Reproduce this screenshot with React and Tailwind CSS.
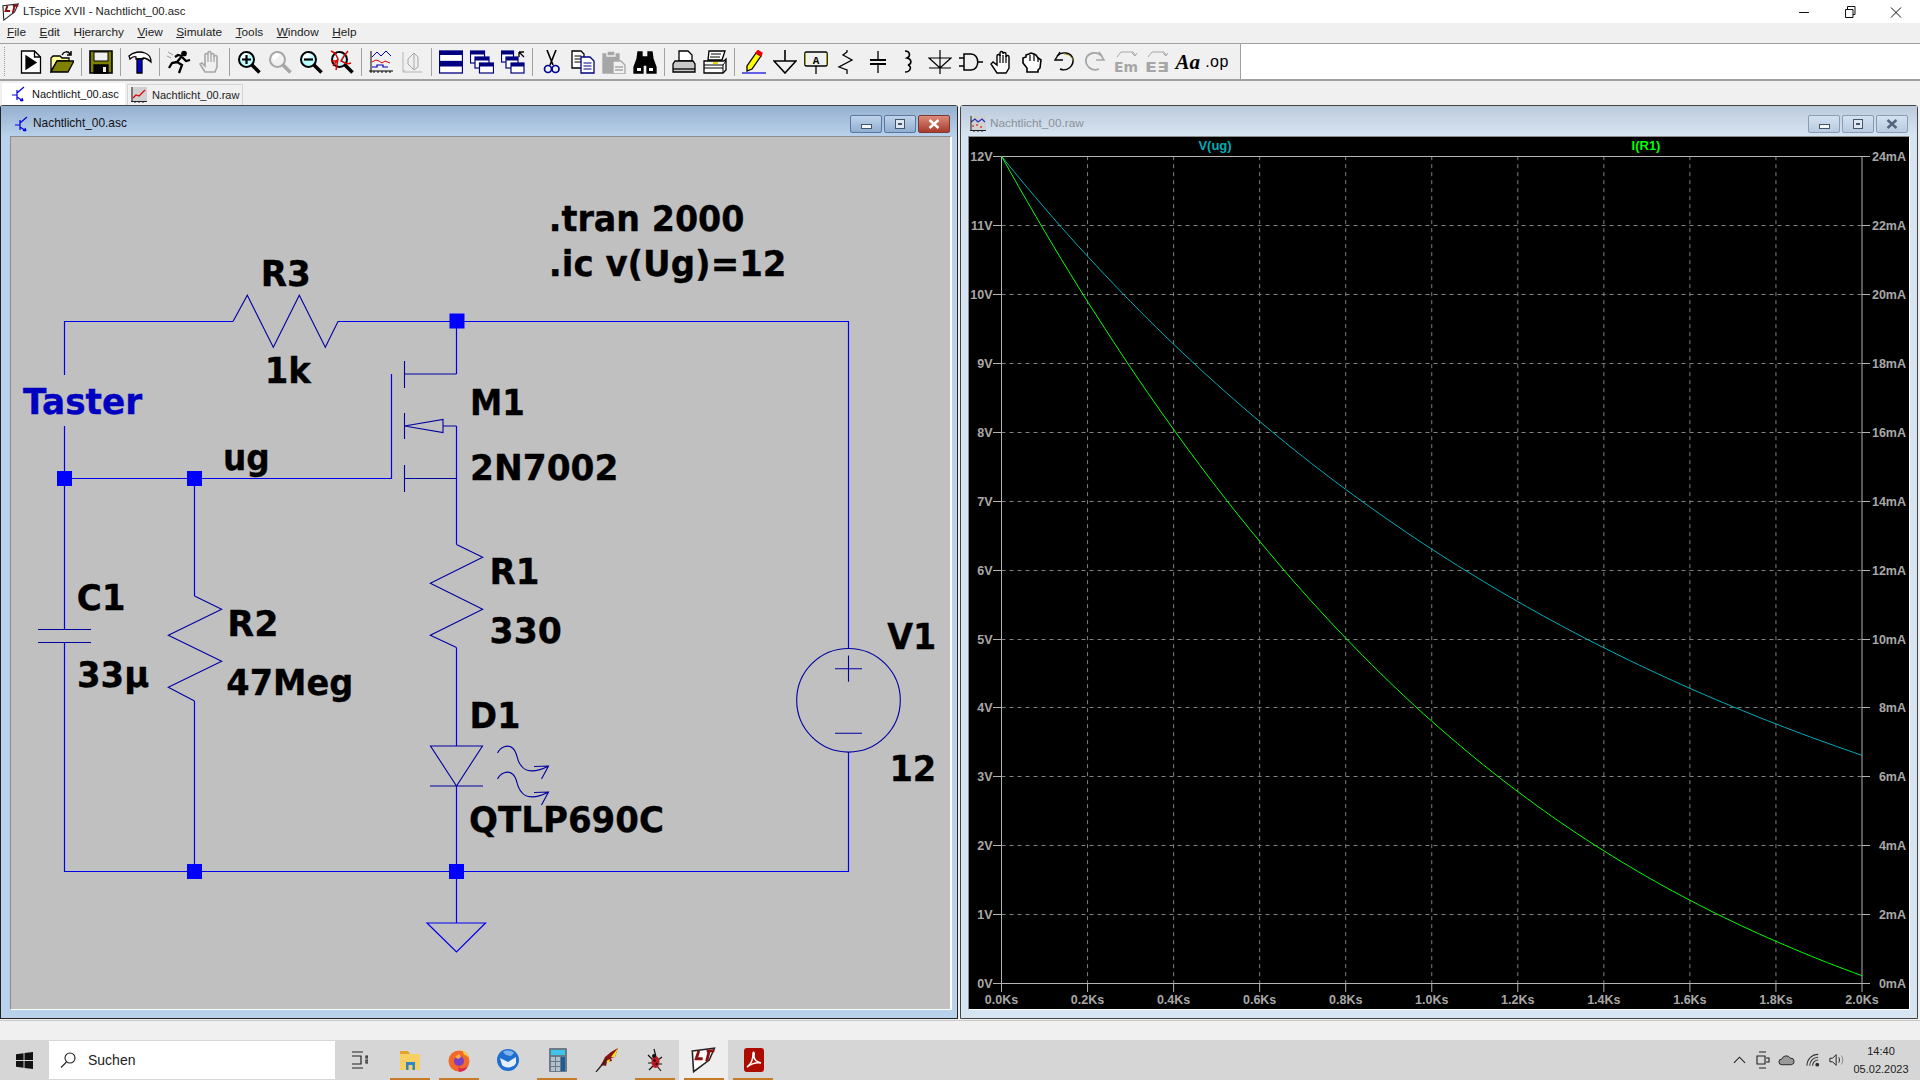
import React from "react";

const uiFont = "font-['Liberation_Sans',Arial,sans-serif]";

// toolbar icon wrapper, everything is drawn on a 24 grid
const Ico = ({ children }) => (
  <svg viewBox="0 0 24 24" className="w-[24px] h-[24px] shrink-0" fill="none" stroke="#000" strokeWidth="1.3">
    {children}
  </svg>
);

const Lens = ({ color = "#000", glass = "#bff", children }) => (
  <>
    <circle cx="9.5" cy="9.5" r="7.5" fill={glass} stroke={color} strokeWidth="2" />
    <path d="M4 8a6 6 0 0 1 5-5l3 2-6 6z" fill="#fff" stroke="none" />
    <path d="M15 15l7.5 7.5" stroke={color} strokeWidth="3.5" />
    {children}
  </>
);

const NewIcon = () => (
  <Ico>
    <path d="M2.5 1h13l6 6v16h-19z" fill="#fff" />
    <path d="M15.5 1v6h6" />
    <path d="M7 6l10 6.5L7 19z" fill="#000" />
  </Ico>
);
const OpenIcon = () => (
  <Ico>
    <path d="M1 21V8l2-2h7l2 2h7v3H7z" fill="#ffff99" />
    <path d="M1 22l6-11h17l-6 11z" fill="#808000" />
    <path d="M12 5c2-4 6-4 8-1M21 1v4h-4" strokeWidth="1.5" />
  </Ico>
);
const SaveIcon = () => (
  <Ico>
    <path d="M1 1h22v22H1z" fill="#808000" strokeWidth="1.6" />
    <path d="M5 2h14v9H5z" fill="#efefef" strokeWidth="1" />
    <path d="M5 15h14v8H5z" fill="#000" />
    <path d="M14 17h3v5h-3z" fill="#efefef" stroke="none" />
  </Ico>
);
const HammerIcon = () => (
  <Ico>
    <path d="M1 6c4-4 11-5 16-3 3 1 6 4 6 9-3-3-5-4-8-4v1H8V7C6 6 4 7 2 9z" fill="#fff" />
    <path d="M9 9h5v14H9z" fill="#0000d0" stroke="#000" />
  </Ico>
);
const RunIcon = () => (
  <Ico>
    <circle cx="17" cy="3.5" r="2.2" fill="#000" />
    <path d="M15 6l-5 6 5 3-3 8M10 12l-5 1-3 5M15 7l4 4 4-1M15 6l-4-1-3 2" strokeWidth="2.3" />
    <path d="M1 2l5 3M0 6l4 2" stroke="#999" strokeWidth="1" />
  </Ico>
);
const HaltIcon = () => (
  <Ico>
    <path
      d="M7 22l-5-8 2-1 3 3V5a1.5 1.5 0 0 1 3 0V3a1.5 1.5 0 0 1 3 0v2a1.5 1.5 0 0 1 3 0v2a1.5 1.5 0 0 1 3 0v10l-2 5z"
      stroke="#a6a6a6"
      strokeWidth="1.6"
    />
    <path d="M10 5v7M13 5v7M16 6v6" stroke="#a6a6a6" />
  </Ico>
);
const ZoomInIcon = () => (
  <Ico>
    <Lens>
      <path d="M5 9.5h9M9.5 5v9" strokeWidth="2.2" />
    </Lens>
  </Ico>
);
const ZoomPanIcon = () => (
  <Ico>
    <Lens color="#a6a6a6" glass="#f0f0f0" />
  </Ico>
);
const ZoomOutIcon = () => (
  <Ico>
    <Lens>
      <path d="M5 9.5h9" strokeWidth="2.2" />
    </Lens>
  </Ico>
);
const ZoomFitIcon = () => (
  <Ico>
    <Lens>
      <path d="M1 1l4 2 3 6-5 7M18 1l-4 5-3 5 6 3 4-1M8 9l-2 11M1 11h6" stroke="#e00000" strokeWidth="1.5" />
    </Lens>
  </Ico>
);
const PlotIcon = () => (
  <Ico>
    <path d="M2 1v22M0 21h24M5 21v2M9 21v2M13 21v2M17 21v2M21 21v2" strokeWidth="1" />
    <path d="M3 7l5-5 4 4 5-5 5 5" stroke="#0000c0" strokeWidth="1" />
    <path d="M3 12l4-2 3 1 3 2 3-2 5 2" stroke="#e00000" strokeWidth="1" />
    <path d="M3 17h5v-2h6v2h5" stroke="#0000c0" strokeWidth="1.2" />
  </Ico>
);
const FftIcon = () => (
  <Ico>
    <path d="M3 2v20h19M3 22l2-2" stroke="#b4b4b4" strokeWidth="1" />
    <path d="M8 9l6-6 4 4v10l-4 3-6-6zM14 3v17" stroke="#a6a6a6" strokeWidth="1" />
  </Ico>
);
const Win = ({ x, y, w, h }) => (
  <>
    <rect x={x} y={y} width={w} height={h} fill="#fff" stroke="#000080" strokeWidth="1.2" />
    <rect x={x} y={y} width={w} height="3.5" fill="#000080" stroke="none" />
  </>
);
const TileIcon = () => (
  <Ico>
    <rect x="0.5" y="1" width="23" height="10.5" fill="#fff" stroke="#000080" />
    <rect x="0.5" y="1" width="23" height="4" fill="#000080" stroke="none" />
    <rect x="0.5" y="12.5" width="23" height="10.5" fill="#fff" stroke="#000080" />
    <rect x="0.5" y="12.5" width="23" height="4" fill="#000080" stroke="none" />
  </Ico>
);
const CascadeIcon = () => (
  <Ico>
    <Win x="0.5" y="1" w="14" h="12" />
    <Win x="5" y="7" w="14" h="11" />
    <Win x="9.5" y="13" w="14" h="10" />
  </Ico>
);
const Cascade2Icon = () => (
  <Ico>
    <Win x="0.5" y="1" w="12" h="11" />
    <Win x="5" y="7" w="12" h="11" />
    <Win x="10" y="13" w="13" h="10" />
    <path d="M18 2h5M18 2v5M18 2l5 5" strokeWidth="1.3" />
  </Ico>
);
const CutIcon = () => (
  <Ico>
    <path d="M7 0l6 15M16 0l-6 15" strokeWidth="1.6" />
    <circle cx="8" cy="19" r="3.5" stroke="#000090" strokeWidth="1.7" />
    <circle cx="15.5" cy="19" r="3.5" stroke="#000090" strokeWidth="1.7" />
  </Ico>
);
const CopyIcon = () => (
  <Ico>
    <path d="M1 1h9l3 3v14H1z" fill="#fff" />
    <path d="M3.5 6h7M3.5 9h7M3.5 12h7" strokeWidth="1" />
    <path d="M10 7h9l4 4v12H10z" fill="#fff" stroke="#000080" />
    <path d="M12.5 13h8M12.5 16h8M12.5 19h8" stroke="#000080" strokeWidth="1" />
  </Ico>
);
const PasteIcon = () => (
  <Ico>
    <path d="M1 4h16v19H1z" fill="#a6a6a6" stroke="#a6a6a6" />
    <path d="M5 1h8v5H5z" fill="#a6a6a6" stroke="#f0f0f0" />
    <path d="M11 11h8l4 4v9H11z" fill="#f0f0f0" stroke="#a6a6a6" />
    <path d="M13 17h8M13 20h8" stroke="#a6a6a6" />
  </Ico>
);
const BinocularsIcon = () => (
  <Ico>
    <path d="M5 2h4v5h6V2h4l1 7 3 8v6h-9v-8h-4v8H1v-6l3-8z" fill="#000" />
    <path d="M4 18h4v3H4zM16 18h4v3h-4z" fill="#fff" stroke="none" />
  </Ico>
);
const PreviewIcon = () => (
  <Ico>
    <path d="M7 1h9l4 4v6H7z" fill="#fff" />
    <path d="M3 11h18l2 3v8H1v-8z" fill="#c8c8c8" />
    <path d="M1 19h22" />
  </Ico>
);
const PrintIcon = () => (
  <Ico>
    <path d="M6 1h16l-3 9H5z" fill="#fff" />
    <path d="M8 4h10M7 7h10" strokeWidth="1" />
    <path d="M1 11h20l2-2v11l-3 3H1z" fill="#fff" />
    <path d="M1 15h19l3-4M1 18h19M20 15v8" strokeWidth="1" />
    <path d="M10 13h5" stroke="#e8d800" strokeWidth="2" />
  </Ico>
);
const PencilIcon = () => (
  <Ico>
    <path d="M14 3l5 3-9 13-5 2 0-5z" fill="#ffff00" />
    <path d="M14 3l2-2.5 4 2.5-1 3z" fill="#e00000" stroke="#e00000" />
    <path d="M0 23h24" stroke="#0000e0" strokeWidth="1.2" />
  </Ico>
);
const GroundIcon = () => (
  <Ico>
    <path d="M12 0v11M1 11h22L12 23z" strokeWidth="1.6" />
  </Ico>
);
const LabelIcon = () => (
  <Ico>
    <rect x="1" y="2" width="22" height="14" rx="1.5" fill="#f0f0f0" stroke="#000" strokeWidth="1.6" />
    <path d="M1.5 3v12M22.5 3v12" stroke="#a0a000" strokeWidth="1" />
    <text x="12" y="13.5" textAnchor="middle" fontSize="11" fontWeight="700" fill="#000" stroke="none" className="font-['Liberation_Mono']">A</text>
    <path d="M12 16v8" />
  </Ico>
);
const ResIcon = () => (
  <Ico>
    <path d="M12 0v2l-4 3 9 5-13 7 8 3v4" strokeWidth="1.3" />
  </Ico>
);
const CapIcon = () => (
  <Ico>
    <path d="M12 1v9M12 14v9" />
    <path d="M4 10h16M4 14h16" strokeWidth="2" />
  </Ico>
);
const CoilIcon = () => (
  <Ico>
    <path d="M8 1c5 0 6 5 2 7 5 1 5 6 1 7 4 1 3 7-3 7" strokeWidth="1.6" />
  </Ico>
);
const DiodeIcon = () => (
  <Ico>
    <path d="M12 0v24M1 8h22L12 18zM1 18h22" strokeWidth="1.2" />
  </Ico>
);
const GateIcon = () => (
  <Ico>
    <path d="M5 4h7c9 0 9 16 0 16H5zM0 8h5M0 16h5M19 12h5" strokeWidth="1.5" />
  </Ico>
);
const HandIcon = ({ w = "1.4" }) => (
  <Ico>
    <path
      d="M7 23l-6-9 2-2 4 3V6a1.5 1.5 0 0 1 3 0V3a1.5 1.5 0 0 1 3 0v1a1.5 1.5 0 0 1 3 0v3a1.5 1.5 0 0 1 3 0v11l-3 5z"
      fill="#fff"
      strokeWidth={w}
    />
    <path d="M10 5v8M13 5v8M16 6v7" strokeWidth="1.2" />
  </Ico>
);
const Hand2Icon = () => (
  <Ico>
    <path d="M6 22v-4l-4-5V8l3-1V5l3-1 2-1 3 1 2 1 2 3 3 2-1 8-2 2v2z" fill="#fff" strokeWidth="1.6" />
    <path d="M9 5v6M13 4v7M17 7v5" strokeWidth="1.2" />
  </Ico>
);
const UndoIcon = () => (
  <Ico>
    <path d="M5 6c5-5 14-4 16 3 1 7-6 13-13 10" strokeWidth="1.4" />
    <path d="M8 2L3 10h8" fill="none" strokeWidth="1.4" />
    <path d="M12 4c4 0 8 2 9 6" stroke="#a08000" strokeWidth="1" />
  </Ico>
);
const RedoIcon = () => (
  <Ico>
    <path d="M19 6C14 1 5 2 3 9c-1 7 6 13 13 10" stroke="#a6a6a6" strokeWidth="1.8" />
    <path d="M16 2l5 8h-8" stroke="#a6a6a6" strokeWidth="1.6" />
  </Ico>
);
const RotateIcon = ({ children }) => (
  <Ico>
    <path d="M3 7l4-5h12l2 3M18 3l3 3 2-3" stroke="#a6a6a6" strokeWidth="1" />
    <text x="0" y="22" fontSize="14" fontWeight="700" fill="#a6a6a6" stroke="none" className="font-['DejaVu_Sans']" textLength="24" lengthAdjust="spacingAndGlyphs">{children}</text>
  </Ico>
);
const FontIcon = () => (
  <span className="w-[24px] text-center font-['Liberation_Serif',serif] italic font-bold text-[21px] leading-none text-black">Aa</span>
);
const OpIcon = () => (
  <span className="w-[24px] text-center whitespace-nowrap font-['Liberation_Sans',sans-serif] text-[16px] leading-none text-black tracking-[0.5px] -ml-[3px]">.op</span>
);

const Sep = () => (
  <div className="w-[8px] flex justify-center shrink-0">
    <div className="w-px h-[28px] bg-[#a0a0a0]" />
  </div>
);

const toolbarItems = [
  NewIcon, OpenIcon, "|", SaveIcon, "|", HammerIcon, "|", RunIcon, HaltIcon, "|",
  ZoomInIcon, ZoomPanIcon, ZoomOutIcon, ZoomFitIcon, "|", PlotIcon, FftIcon, "|",
  TileIcon, CascadeIcon, Cascade2Icon, "|", CutIcon, CopyIcon, PasteIcon, BinocularsIcon, "|",
  PreviewIcon, PrintIcon, "|", PencilIcon, GroundIcon, LabelIcon, ResIcon, CapIcon, CoilIcon,
  DiodeIcon, GateIcon, HandIcon, Hand2Icon, UndoIcon, RedoIcon,
  () => <RotateIcon>Em</RotateIcon>,
  () => <RotateIcon>EƎ</RotateIcon>,
  FontIcon, OpIcon,
];

// little LT logo used in the title bar and on the taskbar
const LtLogo = ({ className }) => (
  <svg viewBox="0 0 20 20" className={className} fill="none">
    <path d="M1 3l17-2-4 9-12 9z" fill="#fff" stroke="#222" strokeWidth="1.2" />
    <path d="M6 3L4 9h5M12 3h6M14 3l-2 8" stroke="#8b1010" strokeWidth="2.2" />
  </svg>
);

const TransistorIcon = () => (
  <svg viewBox="0 0 16 16" className="w-[16px] h-[16px] shrink-0" fill="none" stroke="#0000e0" strokeWidth="1.2">
    <path d="M1 9h5M6 4v10M6 7l7-6M6 11l6 4M12 15l-3-.5M12 15l-1-3" />
  </svg>
);

const PlotTabIcon = ({ dim }) => (
  <svg viewBox="0 0 16 16" className="w-[16px] h-[16px] shrink-0" fill="none" strokeWidth="1">
    <rect x="0" y="0" width="16" height="14" fill="#d0d0d0" />
    <path d={dim ? "M1 6l4-3 3 3 4-3 3 3" : "M2 11l3-3 3 1 6-6"} stroke={dim ? "#2030c0" : "#e00000"} strokeWidth="1.2" />
    {dim && <path d="M2 10h2M6 9h2M10 11h2" stroke="#e00000" />}
    <path d="M1 0v15M0 14.5h16M4 14v2M8 14v2M12 14v2" stroke="#222" />
  </svg>
);

const CaptionButton = ({ kind, active }) => {
  const red = active && kind === "close";
  return (
    <div
      className={
        red
          ? "w-[32px] h-[18px] rounded-[2px] border border-[#7a3a32] bg-gradient-to-b from-[#dc8a7c] to-[#a83a2c] flex items-center justify-center"
          : active
            ? "w-[32px] h-[18px] rounded-[2px] border border-[#5a78a0] bg-gradient-to-b from-[#c0d4ea] to-[#8faed0] flex items-center justify-center"
            : "w-[32px] h-[18px] rounded-[2px] border border-[#8a9cb4] bg-gradient-to-b from-[#d4e2f0] to-[#b8cbe0] flex items-center justify-center"
      }
    >
      {kind === "min" && <div className="w-[11px] h-[5px] mt-[4px] bg-[#f4f6f9] border border-[#44546a]" />}
      {kind === "max" && <div className="w-[10px] h-[10px] border border-[#44546a] bg-[#dfe7f0] flex items-center justify-center"><div className="w-[4px] h-[2px] bg-[#44546a]" /></div>}
      {kind === "close" && (
        <svg viewBox="0 0 12 10" className="w-[12px] h-[10px]">
          <path d="M1.5 1l9 8M10.5 1l-9 8" stroke={active ? "#fff" : "#52647c"} strokeWidth="2.4" />
        </svg>
      )}
    </div>
  );
};

const MdiWindow = ({ active, title, icon, children }) => (
  <div
    className={
      active
        ? "w-[958px] h-full flex flex-col rounded-t-[3px] border border-[#222] border-t-[#444] bg-[#b9d1ea]"
        : "w-[958px] h-full flex flex-col rounded-t-[3px] border border-[#444] bg-[#d7e4f2]"
    }
  >
    <div
      className={
        active
          ? "h-[30px] shrink-0 flex items-center bg-gradient-to-b from-[#95b0d0] to-[#b9d1ea] pt-[6px] pl-[13px] pr-[7px]"
          : "h-[30px] shrink-0 flex items-center bg-gradient-to-b from-[#bccbdc] to-[#d7e4f2] pt-[6px] pl-[9px] pr-[9px]"
      }
    >
      {icon}
      <span className={active ? `ml-[3px] text-[11.9px] text-[#111] ${uiFont}` : `ml-[4px] text-[11.8px] text-[#8a9098] ${uiFont}`}>{title}</span>
      <div className="ml-auto flex gap-[2px]">
        <CaptionButton kind="min" active={active} />
        <CaptionButton kind="max" active={active} />
        <CaptionButton kind="close" active={active} />
      </div>
    </div>
    {children}
  </div>
);

// ---- schematic ----
const Wire = ({ d }) => <path d={d} stroke="#0000f0" strokeWidth="1.2" fill="none" />;
const Part = ({ d }) => <path d={d} stroke="#0000a0" strokeWidth="1.1" fill="none" />;
const Dot = ({ x, y }) => <rect x={x - 7.5} y={y - 7.5} width="15" height="15" fill="#0000ff" />;
// ink of the glyphs is a bit narrower than the advance, so widen a little
const Label = ({ x, y, w, children, fill = "#000" }) => (
  <text
    x={x - 1}
    y={y}
    textLength={w + 2.5}
    lengthAdjust="spacingAndGlyphs"
    fill={fill}
    stroke={fill}
    strokeWidth="0.35"
    className="font-['DejaVu_Sans',sans-serif] font-bold text-[36px]"
  >
    {children}
  </text>
);

const Schematic = () => (
  <svg viewBox="11 137 939 872" className="w-[939px] h-[872px] block">
    <Wire d="M64.5 375V321.5H233M338 321.5H848.5V648M848.5 752V871.5H64.5V642M64.5 629V426" />
    <Wire d="M64.5 478.5H391.5V374M194.5 478.5V596M194.5 701V871.5" />
    <Wire d="M456.5 321.5V374M456.5 426V544.5M456.5 647.5V746M456.5 786V923" />
    <Dot x={457} y={321} />
    <Dot x={64.5} y={478.5} />
    <Dot x={194.5} y={478.5} />
    <Dot x={194.5} y={871.5} />
    <Dot x={456.5} y={871.5} />

    <Part d="M233 321.5L247.3 295.3L273.3 347.3L299.3 295.3L325.3 347.3L338 321.5" />
    <Part d="M194.5 596L221.7 609.3L168.3 635.3L221.7 661.3L168.3 687.3L194.5 701" />
    <Part d="M456.5 544.5L482.7 557.3L430.3 583.3L482.7 609.3L430.3 635.3L456.5 647.5" />
    <Part d="M38 629.5H91M38 642.5H91" />

    <Part d="M404.5 361V388M404.5 413V439M404.5 465V492" />
    <Part d="M404.5 374H456.5M404.5 478.5H456.5M404.5 426L443 419.5V432.5ZM443 426H456.5" />

    <Part d="M456.5 786L430.5 746H482.5ZM430 786H483" />
    <Part d="M497.5 753c3-6 10-9 15-5 6 5 3 12 9 18 4 6 14 7 27 0M534 766.5l14.5-.5-7 13" />
    <Part d="M497.5 779c3-6 10-9 15-5 6 5 3 12 9 18 4 6 14 7 27 0M534 792.5l14.5-.5-7 13" />

    <Wire d="M427 923H485.5L456.5 952Z" />

    <circle cx="848.5" cy="700.3" r="51.8" fill="none" stroke="#0000a0" strokeWidth="1.1" />
    <Part d="M835 668.7H862M848.5 655.5V681.7M835 733.3H862" />

    <Label x={549.8} y={231} w={193.2}>.tran 2000</Label>
    <Label x={549.8} y={276} w={235.2}>.ic v(Ug)=12</Label>
    <Label x={261.7} y={286} w={47.6}>R3</Label>
    <Label x={265.7} y={383.3} w={43.6}>1k</Label>
    <Label x={24} y={414} w={116.7} fill="#0000c0">Taster</Label>
    <Label x={224} y={470} w={44.3}>ug</Label>
    <Label x={77.7} y={610} w={46.3}>C1</Label>
    <Label x={78} y={687.3} w={69.7}>33µ</Label>
    <Label x={228.3} y={636} w={48.7}>R2</Label>
    <Label x={227.3} y={695} w={124.4}>47Meg</Label>
    <Label x={471} y={414.5} w={52.3}>M1</Label>
    <Label x={471} y={479.5} w={146}>2N7002</Label>
    <Label x={490.6} y={584.3} w={47.4}>R1</Label>
    <Label x={490.6} y={643} w={69.9}>330</Label>
    <Label x={470.6} y={728.3} w={48.2}>D1</Label>
    <Label x={470} y={831.7} w={192.5}>QTLP690C</Label>
    <Label x={888.3} y={649.3} w={46.5}>V1</Label>
    <Label x={890.4} y={780.5} w={44.4}>12</Label>
  </svg>
);

// ---- waveform plot ----
const X0 = 1001.5;
const X1 = 1862;
const Y0 = 983;
const PER_V = 68.9;
const Y12 = Y0 - 12 * PER_V;
const ug = (t) => 12 * Math.exp(-t / 1551);
const ir1 = (t) => 2.736 * ug(t) - 8.83 - 0.8 * Math.sin((Math.PI * t) / 2000);
const tx = (t) => X0 + ((X1 - X0) * t) / 2000;
const vy = (v) => Math.round(Y0 - PER_V * v) + 0.5;
const samples = Array.from({ length: 101 }, (_, i) => i * 20);
const ugLine = samples.map((t) => `${tx(t).toFixed(1)},${(Y0 - PER_V * ug(t)).toFixed(1)}`).join(" ");
const irLine = samples.map((t) => `${tx(t).toFixed(1)},${(Y0 - (PER_V / 2) * ir1(t)).toFixed(1)}`).join(" ");
const yTicks = Array.from({ length: 13 }, (_, i) => i);
const xTicks = Array.from({ length: 11 }, (_, i) => i);

const AxisText = ({ x, y, anchor, children }) => (
  <text x={x} y={y} textAnchor={anchor} fill="#a8a8a8" className="font-['Liberation_Sans',sans-serif] font-bold text-[12.5px]">
    {children}
  </text>
);

const Plot = () => (
  <svg viewBox="969 137 940 872" className="w-[940px] h-[872px] block bg-black">
    <text x="1215" y="150" textAnchor="middle" fill="#00aeb8" className="font-['Liberation_Sans',sans-serif] font-bold text-[13px]">V(ug)</text>
    <text x="1646" y="150" textAnchor="middle" fill="#00ff00" className="font-['Liberation_Sans',sans-serif] font-bold text-[13px]">I(R1)</text>

    {yTicks.slice(1, 12).map((v) => (
      <line key={v} x1={X0} x2={X1} y1={vy(v)} y2={vy(v)} stroke="#808080" strokeDasharray="4 4" />
    ))}
    {xTicks.slice(1, 10).map((i) => (
      <line key={i} x1={tx(i * 200)} x2={tx(i * 200)} y1={Y12} y2={Y0} stroke="#808080" strokeDasharray="4 4" />
    ))}
    <path d={`M993 ${vy(12)}H1870M993 ${vy(0)}H1870M${X0} ${Y12}V992M${X1} ${Y12}V992`} stroke="#b4b4b4" fill="none" />
    {yTicks.slice(1, 12).map((v) => (
      <path key={v} d={`M993 ${vy(v)}H${X0}M${X1} ${vy(v)}H1870`} stroke="#b4b4b4" />
    ))}
    {xTicks.slice(1, 10).map((i) => (
      <path key={i} d={`M${tx(i * 200)} ${Y0}V992`} stroke="#b4b4b4" />
    ))}

    {yTicks.map((v) => (
      <AxisText key={v} x={992.5} y={vy(v) + 4.5} anchor="end">{v}V</AxisText>
    ))}
    {yTicks.map((v) => (
      <AxisText key={v} x={1906} y={vy(v) + 4.5} anchor="end">{v * 2}mA</AxisText>
    ))}
    {xTicks.map((i) => (
      <AxisText key={i} x={tx(i * 200)} y={1004} anchor="middle">{(i * 0.2).toFixed(1)}Ks</AxisText>
    ))}

    <polyline points={ugLine} fill="none" stroke="#00aeb8" strokeWidth="1" />
    <polyline points={irLine} fill="none" stroke="#00ff00" strokeWidth="1" />
  </svg>
);

// ---- taskbar icons ----
const FolderTask = () => (
  <svg viewBox="0 0 24 24" className="w-[24px] h-[24px]">
    <path d="M2 3h8l2 3H2z" fill="#e3a32a" />
    <path d="M2 6h20v16H2z" fill="#f7cf65" />
    <path d="M8 14h9v8h-2.5v-5h-4v5H8z" fill="#2c87c8" />
  </svg>
);
const FirefoxTask = () => (
  <svg viewBox="0 0 24 24" className="w-[24px] h-[24px]">
    <circle cx="12" cy="13" r="10.5" fill="#f2682a" />
    <path d="M15 1c4 3 7 7 7 12 0-4-3-6-5-6z" fill="#ffcb2e" />
    <path d="M12 24a10 10 0 0 0 9-6c-3 3-8 3-10 1z" fill="#d8265c" />
    <circle cx="12" cy="13" r="5" fill="#7b3fc4" />
    <path d="M8 9l4-3 2 3-3 2z" fill="#ffb04a" />
  </svg>
);
const ThunderbirdTask = () => (
  <svg viewBox="0 0 24 24" className="w-[24px] h-[24px]">
    <circle cx="12" cy="12" r="11" fill="#1f6fd0" />
    <path d="M4 10l8 4 8-5v6c-2 5-11 6-14 2z" fill="#e6eef8" />
    <path d="M7 4c3-2 8-2 11 1l-3 3-5-1z" fill="#7fb2ee" />
  </svg>
);
const CalcTask = () => (
  <svg viewBox="0 0 24 24" className="w-[24px] h-[24px] ml-[2px]">
    <rect x="3" y="0" width="18" height="24" rx="1" fill="#6b7a88" />
    <rect x="5" y="2" width="14" height="5" fill="#3ec6ea" />
    <path d="M5 9h4v4H5zM10 9h4v4h-4zM5 14h4v4H5zM10 14h4v4h-4zM5 19h4v4H5zM10 19h4v4h-4z" fill="#b4c0ca" />
    <rect x="15" y="9" width="4" height="14" fill="#1e5a9c" />
  </svg>
);
const FeatherTask = () => (
  <svg viewBox="0 0 24 24" className="w-[24px] h-[24px] ml-[2px]">
    <path d="M1 24L7 15l3-6 6-5 7-4-3 9-4 1 1 3-5 1-1 4-5-1z" fill="#8a1212" />
    <path d="M16 9l7-9-3 9zM11 13l4-2-1 4z" fill="#f5e420" />
    <path d="M1 24l11-13" stroke="#222" strokeWidth="1.2" />
  </svg>
);
const BugTask = () => (
  <svg viewBox="0 0 24 24" className="w-[24px] h-[24px]" fill="none">
    <path d="M11 1l2 8M5 7l5 5M19 9l-4 3M5 15h4M19 16h-4M6 22l4-4M18 23l-4-5" stroke="#111" strokeWidth="1.2" />
    <ellipse cx="12.5" cy="14" rx="4" ry="6" fill="#c01820" />
    <circle cx="11.5" cy="12.5" r="1.2" fill="#111" />
    <circle cx="13.5" cy="16" r="1.2" fill="#111" />
    <circle cx="11" cy="8" r="2" fill="#111" />
  </svg>
);
const AcrobatTask = () => (
  <svg viewBox="0 0 24 24" className="w-[24px] h-[24px] ml-[2px]" fill="none">
    <rect x="2" y="0" width="20" height="24" rx="3" fill="#ad0b00" />
    <path d="M5 19c4-2 6-8 6-13 0-3 2-2 1 2 0 4 3 6 7 7-4-1-10 1-14 4z" stroke="#fff" strokeWidth="1.5" />
  </svg>
);

const taskApps = [
  { Icon: FolderTask, line: true },
  { Icon: FirefoxTask, line: true },
  { Icon: ThunderbirdTask },
  { Icon: CalcTask, line: true },
  { Icon: FeatherTask },
  { Icon: BugTask, line: true },
  { Icon: () => <LtLogo className="w-[26px] h-[26px]" />, line: true, active: true },
  { Icon: AcrobatTask, line: true },
];

const menus = [
  ["F", "ile"],
  ["E", "dit"],
  ["H", "i", "erarchy"],
  ["V", "iew"],
  ["S", "imulate"],
  ["T", "ools"],
  ["W", "indow"],
  ["H", "elp"],
];

export default function App() {
  return (
    <div className={`w-[1920px] h-[1080px] overflow-hidden flex flex-col bg-[#f0f0f0] ${uiFont}`}>
      {/* Title bar */}
      <div className="h-[23px] shrink-0 bg-white flex items-center pl-[2px]">
        <LtLogo className="w-[18px] h-[18px]" />
        <span className="ml-[3px] text-[11.4px] text-[#222]">LTspice XVII - Nachtlicht_00.asc</span>
        <div className="ml-auto flex items-center">
          <svg viewBox="0 0 46 20" className="w-[46px] h-[20px]"><path d="M18 10.5H28" stroke="#111" /></svg>
          <svg viewBox="0 0 46 20" className="w-[46px] h-[20px]" fill="none"><path d="M18.5 7.5h7.5v8h-7.5zM20.5 7V4.5H28v8h-2" stroke="#111" /></svg>
          <svg viewBox="0 0 46 20" className="w-[46px] h-[20px] mr-[1px]"><path d="M18 5.5l10 10M28 5.5l-10 10" stroke="#111" /></svg>
        </div>
      </div>

      {/* Menu */}
      <div className="h-[20px] shrink-0 flex items-center gap-[13.5px] pl-[7px] text-[11.8px] text-[#222]">
        {menus.map((m) => (
          <span key={m.join("")}>
            {m.length === 3 ? (
              <>
                {m[0]}
                <u>{m[1]}</u>
                {m[2]}
              </>
            ) : (
              <>
                <u>{m[0]}</u>
                {m[1]}
              </>
            )}
          </span>
        ))}
      </div>

      {/* Toolbar */}
      <div className="h-[38px] shrink-0 border-t border-b-2 border-[#a0a0a0] bg-white flex">
        <div className="w-[1241px] bg-[#f0f0f0] border-r border-[#a0a0a0] flex items-center pl-[15px] pt-[1px] relative">
          <div className="absolute left-[4px] top-[3px] bottom-[3px] border-l border-dotted border-[#999]" />
          {toolbarItems.map((Item, i) =>
            Item === "|" ? (
              <Sep key={i} />
            ) : (
              <div key={i} className="w-[31px] shrink-0 flex justify-center items-center">
                <Item />
              </div>
            )
          )}
        </div>
      </div>

      {/* Tabs */}
      <div className="h-[24px] shrink-0 flex items-end pl-[2px] gap-[2px]">
        <div className="w-[123px] h-[22px] bg-white flex items-center gap-[5px] pl-[9px] text-[11px] text-[#111]">
          <TransistorIcon />
          Nachtlicht_00.asc
        </div>
        <div className="w-[116px] h-[21px] bg-[#f0f0f0] border border-b-0 border-[#d4d4d4] flex items-center gap-[5px] pl-[3px] text-[11px] text-[#222]">
          <PlotTabIcon />
          Nachtlicht_00.raw
        </div>
      </div>

      {/* MDI area */}
      <div className="h-[915px] shrink-0 flex gap-[2px] pb-[1px]">
        <MdiWindow active title="Nachtlicht_00.asc" icon={<TransistorIcon />}>
          <div className="ml-[9px] mr-[6px] border-t border-l border-[#8c8c8c] border-r-2 border-r-white border-b border-b-white w-[942px] bg-[#c0c0c0]">
            <Schematic />
          </div>
        </MdiWindow>
        <MdiWindow title="Nachtlicht_00.raw" icon={<PlotTabIcon dim />}>
          <div className="mx-[7px] border-t border-l border-[#8c8c8c] border-r border-r-white border-b border-b-white w-[942px] bg-black">
            <Plot />
          </div>
        </MdiWindow>
      </div>

      {/* Status bar */}
      <div className="h-[20px] shrink-0 border-t border-[#c8c8c8]" />

      {/* Taskbar */}
      <div className="h-[40px] shrink-0 bg-[#d6d6d6] flex items-stretch">
        <div className="w-[49px] flex items-center justify-center">
          <svg viewBox="0 0 18 18" className="w-[17px] h-[17px]">
            <path d="M0 2.5L8 1.2V8.4H0zM9 1L18 0V8.4H9zM0 9.6H8V16.8L0 15.5zM9 9.6H18V18L9 17z" fill="#111" />
          </svg>
        </div>
        <div className="w-[286px] my-[1px] bg-white flex items-center pl-[11px] gap-[12px] text-[14px] text-[#222]">
          <svg viewBox="0 0 16 16" className="w-[16px] h-[16px]" fill="none" stroke="#222" strokeWidth="1.1">
            <circle cx="10" cy="6" r="5" />
            <path d="M6.5 10L1 15.5" />
          </svg>
          Suchen
        </div>
        <div className="w-[50px] flex items-center justify-center">
          <svg viewBox="0 0 16 18" className="w-[16px] h-[18px]" fill="none" stroke="#222" strokeWidth="1.2">
            <path d="M0 1h11M0 17h11M0 5h9v8H0M14 5h2v2h-2zM14 9h2v3h-2z" />
          </svg>
        </div>
        {taskApps.map(({ Icon, line, active }, i) => (
          <div key={i} className={active ? "w-[49px] flex flex-col items-center bg-[#eeeeee]" : "w-[49px] flex flex-col items-center"}>
            <div className="flex-1 flex items-center justify-center pt-[2px]">
              <Icon />
            </div>
            <div className={line ? "h-[2px] w-[40px] bg-[#c57a2c]" : "h-[2px]"} />
          </div>
        ))}
        <div className="ml-auto flex items-center pr-[11px] gap-[8px] text-[#222]">
          <svg viewBox="0 0 14 8" className="w-[13px] h-[8px]" fill="none" stroke="#222" strokeWidth="1.2"><path d="M1 7l6-6 6 6" /></svg>
          <svg viewBox="0 0 14 18" className="w-[14px] h-[18px] ml-[2px]" fill="none" stroke="#222" strokeWidth="1.1"><path d="M3 1h7M3 17h7M1 5h8v8H1zM10 7h3v4h-3" /></svg>
          <svg viewBox="0 0 18 12" className="w-[17px] h-[12px]" fill="#999" stroke="#222"><path d="M4 11a3 3 0 0 1 0-6 5 5 0 0 1 9-1 3.5 3.5 0 0 1 1 7z" /></svg>
          <svg viewBox="0 0 16 14" className="w-[15px] h-[14px] ml-[3px]" fill="none" stroke="#333" strokeWidth="1.1"><path d="M1 13a12 12 0 0 1 12-12M4 13a9 9 0 0 1 9-9M7 13a6 6 0 0 1 6-6" /><circle cx="12" cy="12" r="1.5" fill="#222" /></svg>
          <svg viewBox="0 0 18 14" className="w-[16px] h-[14px]" fill="none" stroke="#222" strokeWidth="1.1"><path d="M1 5h3l4-4v12l-4-4H1zM11 4c1 2 1 4 0 6" /><path d="M14 2c2 3 2 7 0 10" stroke="#888" /></svg>
          <div className="w-[56px] text-center text-[11px] leading-[18px]">
            <div>14:40</div>
            <div>05.02.2023</div>
          </div>
        </div>
      </div>
    </div>
  );
}
